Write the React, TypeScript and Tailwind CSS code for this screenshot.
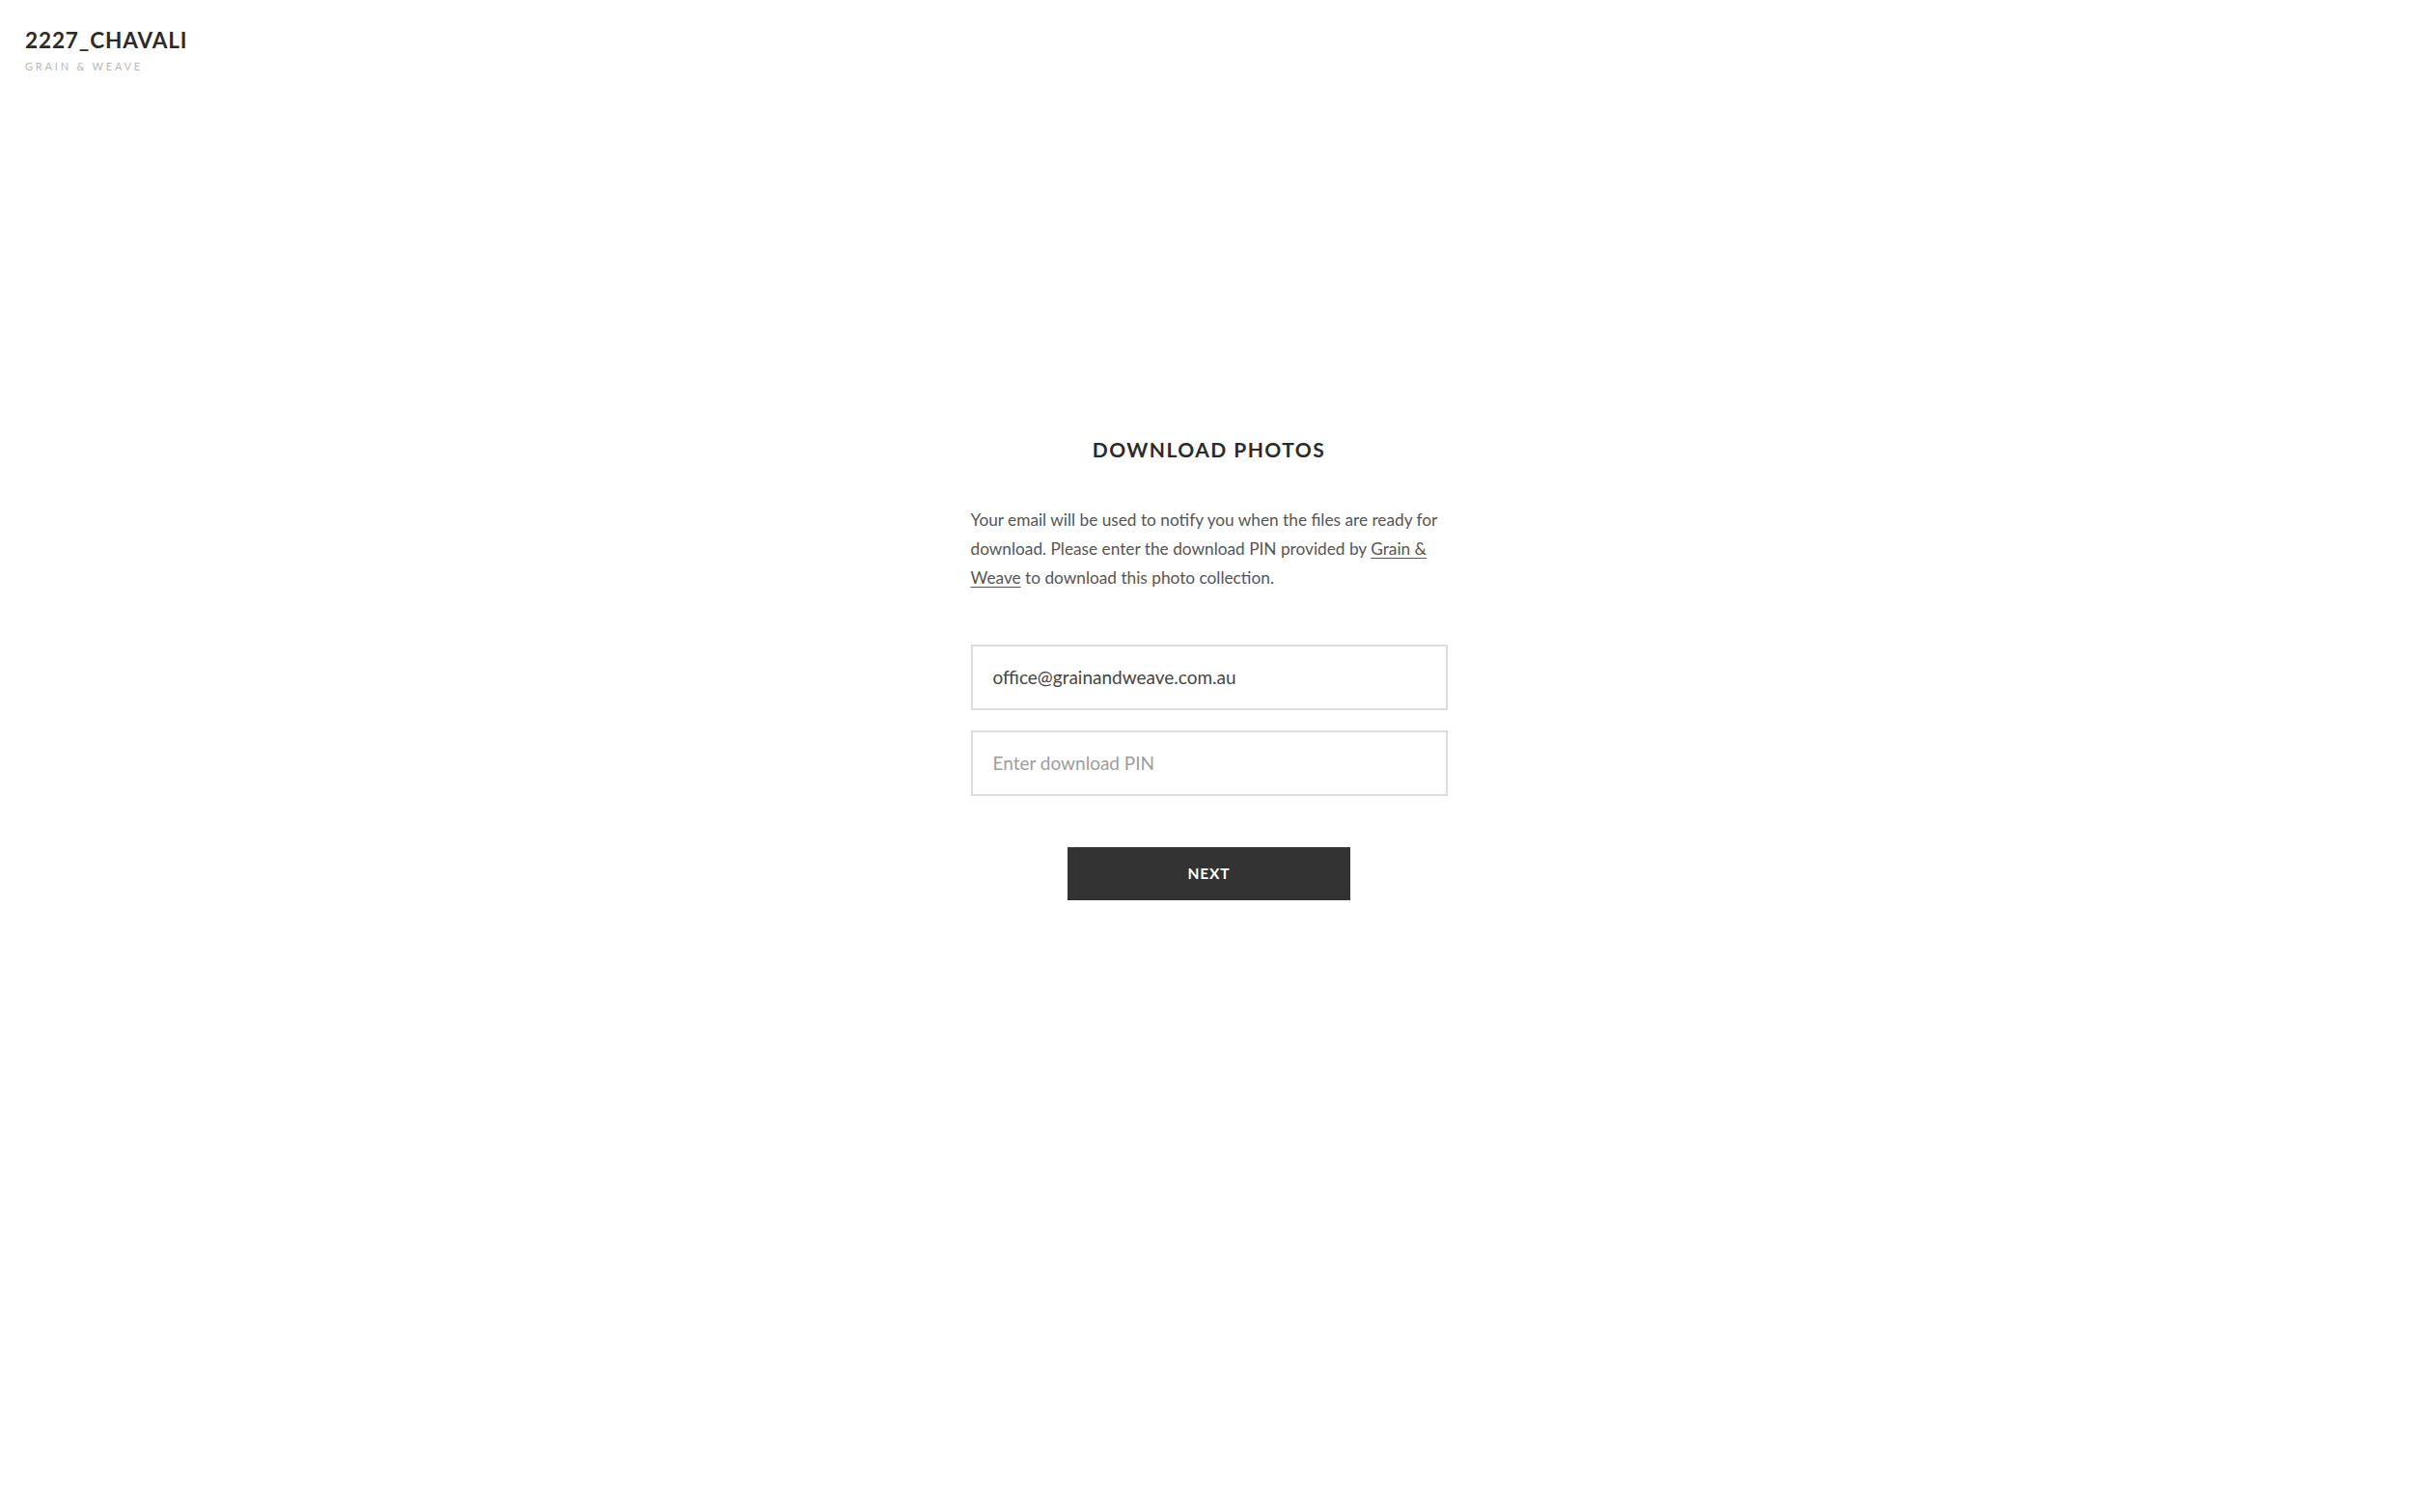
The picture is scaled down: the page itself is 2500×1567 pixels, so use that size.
import React from 'react';

export default function App() {
  return (
    <div className="min-h-[1567px] w-full bg-white font-['Lato','Open_Sans',sans-serif]">
      <header className="px-[26px] pt-[28px]">
        <div className="text-[22.5px] leading-[28px] font-bold tracking-[0.9px] text-[#2b2b2b]">2227_CHAVALI</div>
        <div className="mt-[6px] text-[11px] leading-[14px] tracking-[2.8px] text-[#b9b9b9]">GRAIN &amp; WEAVE</div>
      </header>

      <main className="flex justify-center pl-[5px] pt-[375px]">
        <div className="flex w-[494px] flex-col">
          <h1 className="text-center text-[21px] leading-[30px] font-bold tracking-[1.45px] text-[#2b2b2b]">
            DOWNLOAD PHOTOS
          </h1>
          <p className="mt-[43px] text-[17.25px] leading-[30px] text-[#555555]">
            Your email will be used to notify you when the files are ready for download. Please enter the download PIN
            provided by{' '}
            <a href="#" className="underline decoration-1 underline-offset-[3px]">
              Grain &amp; Weave
            </a>{' '}
            to download this photo collection.
          </p>

          <form className="mt-[54px] flex flex-col gap-[21px]" onSubmit={(e) => e.preventDefault()}>
            <input
              type="email"
              defaultValue="office@grainandweave.com.au"
              className="h-[68px] w-full border-2 border-[#dddddd] px-[21px] pb-[2px] text-[19px] text-[#454545] outline-none"
            />
            <input
              type="text"
              placeholder="Enter download PIN"
              className="h-[68px] w-full border-2 border-[#dddddd] px-[21px] pb-[2px] text-[19px] text-[#454545] outline-none placeholder:text-[#9d9d9d]"
            />
            <div className="flex justify-center pt-[32px]">
              <button
                type="submit"
                className="h-[55px] w-[293px] bg-[#333333] text-[15.5px] font-bold tracking-[0.9px] text-white"
              >
                NEXT
              </button>
            </div>
          </form>
        </div>
      </main>
    </div>
  );
}
